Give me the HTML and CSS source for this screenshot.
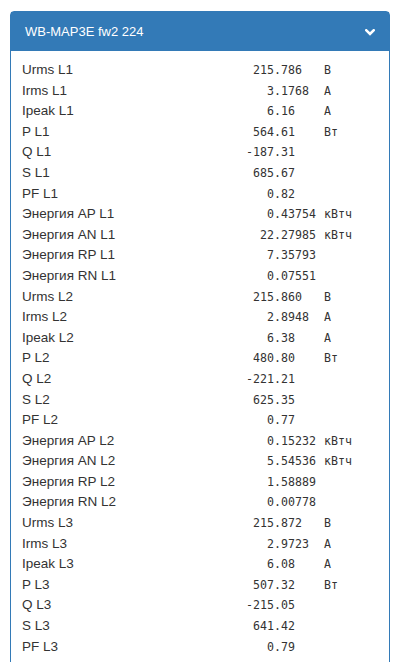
FILE: index.html
```html
<!DOCTYPE html>
<html lang="ru">
<head>
    <meta charset="UTF-8">
    <meta name="viewport" content="width=device-width, initial-scale=1.0">
    <title>WB-MAP3E fw2 224</title>
    <link rel="stylesheet" href="styles.css">
</head>
<body>
    <div class="panel">
        <div class="panel-heading">
            <span class="panel-title">WB-MAP3E fw2 224</span>
            <svg class="chevron" width="10" height="7" viewBox="0 0 10 7">
                <path d="M1.3 1.3 L5 5 L8.7 1.3" fill="none" stroke="#fff" stroke-width="2.6" stroke-linecap="square"/>
            </svg>
        </div>
        <div class="panel-body" id="rows">
            <div class="row"><span class="name">Urms L1</span><span class="int">215</span><span class="frac">.786</span><span class="unit">В</span></div>
            <div class="row"><span class="name">Irms L1</span><span class="int">3</span><span class="frac">.1768</span><span class="unit">А</span></div>
            <div class="row"><span class="name">Ipeak L1</span><span class="int">6</span><span class="frac">.16</span><span class="unit">А</span></div>
            <div class="row"><span class="name">P L1</span><span class="int">564</span><span class="frac">.61</span><span class="unit">Вт</span></div>
            <div class="row"><span class="name">Q L1</span><span class="int">-187</span><span class="frac">.31</span><span class="unit"></span></div>
            <div class="row"><span class="name">S L1</span><span class="int">685</span><span class="frac">.67</span><span class="unit"></span></div>
            <div class="row"><span class="name">PF L1</span><span class="int">0</span><span class="frac">.82</span><span class="unit"></span></div>
            <div class="row"><span class="name">Энергия AP L1</span><span class="int">0</span><span class="frac">.43754</span><span class="unit">кВтч</span></div>
            <div class="row"><span class="name">Энергия AN L1</span><span class="int">22</span><span class="frac">.27985</span><span class="unit">кВтч</span></div>
            <div class="row"><span class="name">Энергия RP L1</span><span class="int">7</span><span class="frac">.35793</span><span class="unit"></span></div>
            <div class="row"><span class="name">Энергия RN L1</span><span class="int">0</span><span class="frac">.07551</span><span class="unit"></span></div>
            <div class="row"><span class="name">Urms L2</span><span class="int">215</span><span class="frac">.860</span><span class="unit">В</span></div>
            <div class="row"><span class="name">Irms L2</span><span class="int">2</span><span class="frac">.8948</span><span class="unit">А</span></div>
            <div class="row"><span class="name">Ipeak L2</span><span class="int">6</span><span class="frac">.38</span><span class="unit">А</span></div>
            <div class="row"><span class="name">P L2</span><span class="int">480</span><span class="frac">.80</span><span class="unit">Вт</span></div>
            <div class="row"><span class="name">Q L2</span><span class="int">-221</span><span class="frac">.21</span><span class="unit"></span></div>
            <div class="row"><span class="name">S L2</span><span class="int">625</span><span class="frac">.35</span><span class="unit"></span></div>
            <div class="row"><span class="name">PF L2</span><span class="int">0</span><span class="frac">.77</span><span class="unit"></span></div>
            <div class="row"><span class="name">Энергия AP L2</span><span class="int">0</span><span class="frac">.15232</span><span class="unit">кВтч</span></div>
            <div class="row"><span class="name">Энергия AN L2</span><span class="int">5</span><span class="frac">.54536</span><span class="unit">кВтч</span></div>
            <div class="row"><span class="name">Энергия RP L2</span><span class="int">1</span><span class="frac">.58889</span><span class="unit"></span></div>
            <div class="row"><span class="name">Энергия RN L2</span><span class="int">0</span><span class="frac">.00778</span><span class="unit"></span></div>
            <div class="row"><span class="name">Urms L3</span><span class="int">215</span><span class="frac">.872</span><span class="unit">В</span></div>
            <div class="row"><span class="name">Irms L3</span><span class="int">2</span><span class="frac">.9723</span><span class="unit">А</span></div>
            <div class="row"><span class="name">Ipeak L3</span><span class="int">6</span><span class="frac">.08</span><span class="unit">А</span></div>
            <div class="row"><span class="name">P L3</span><span class="int">507</span><span class="frac">.32</span><span class="unit">Вт</span></div>
            <div class="row"><span class="name">Q L3</span><span class="int">-215</span><span class="frac">.05</span><span class="unit"></span></div>
            <div class="row"><span class="name">S L3</span><span class="int">641</span><span class="frac">.42</span><span class="unit"></span></div>
            <div class="row"><span class="name">PF L3</span><span class="int">0</span><span class="frac">.79</span><span class="unit"></span></div>
            <div class="row"><span class="name">Энергия AP L3</span><span class="int">0</span><span class="frac">.18811</span><span class="unit">кВтч</span></div>
            <div class="row"><span class="name">Энергия AN L3</span><span class="int">6</span><span class="frac">.12840</span><span class="unit">кВтч</span></div>
        </div>
    </div>
</body>
</html>
```

FILE: styles.css
```css
body {
    margin: 11px 7px 0 10px;
    font-family: "Liberation Sans", Arial, sans-serif;
    font-size: 13.5px;
    color: #333;
    background-color: #fff;
}
.panel {
    border: 1px solid #337ab7;
    border-radius: 4px 4px 0 0;
    background-color: #fff;
}
.panel-heading {
    display: flex;
    align-items: center;
    justify-content: space-between;
    height: 39px;
    padding: 0 14px;
    background-color: #337ab7;
    color: #fff;
}
.panel-title {
    font-size: 13px;
}
.chevron {
    display: block;
    margin-top: 1px;
}
.panel-body {
    padding: 9px 10px 10px 11px;
}
.row {
    display: flex;
    align-items: baseline;
    height: 20.6px;
    line-height: 20.6px;
}
.name {
    width: 210px;
}
.int, .frac, .unit {
    font-family: "DejaVu Sans Mono", "Liberation Mono", monospace;
    font-size: 11.6px;
}
.int {
    width: 42px;
    text-align: right;
}
.frac {
    width: 50px;
}
```
